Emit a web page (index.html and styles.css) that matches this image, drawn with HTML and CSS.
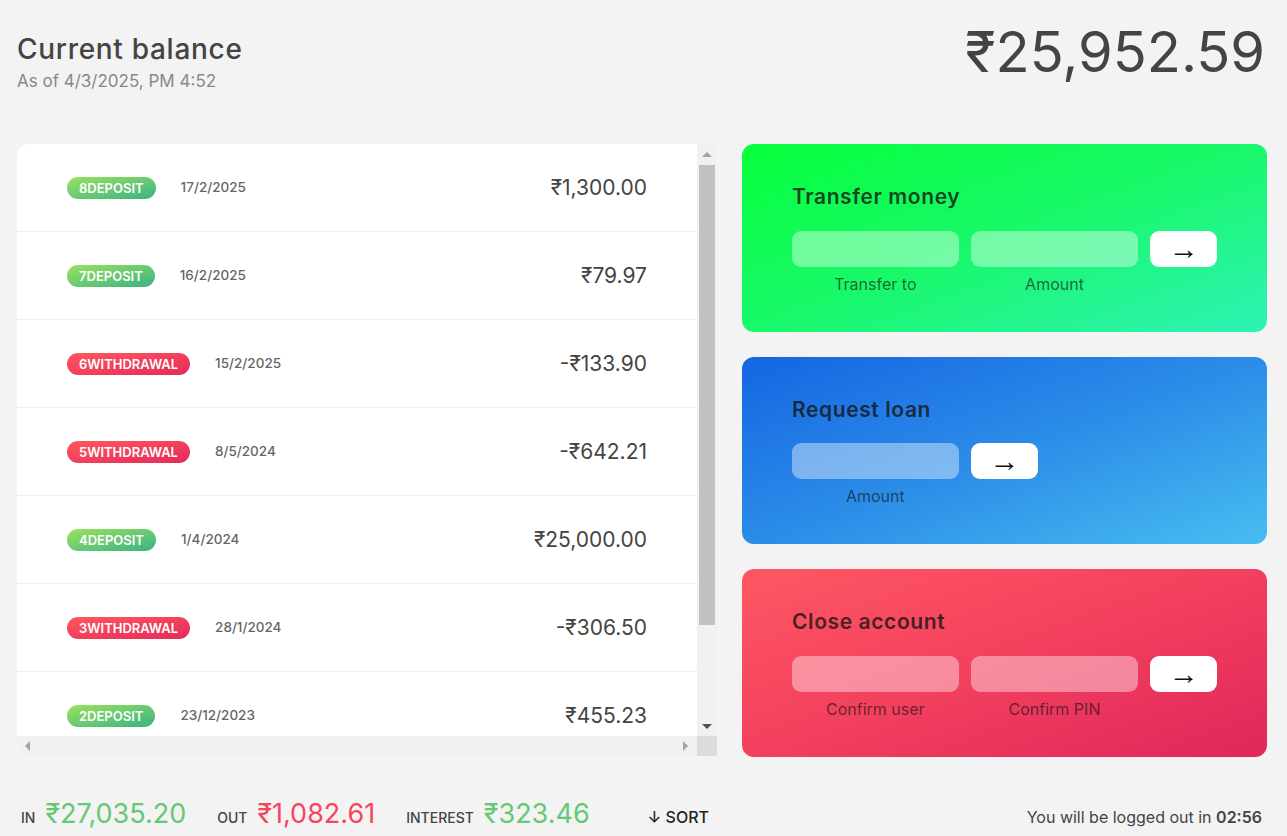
FILE: index.html
```html
<!DOCTYPE html>
<html lang="en">
<head>
<meta charset="utf-8">
<title>Bankist</title>
<link rel="stylesheet" href="styles.css">
</head>
<body>
<main class="app">
  <div class="balance">
    <div>
      <p class="balance__label">Current balance</p>
      <p class="balance__date">As of <span class="date">4/3/2025, PM 4:52</span></p>
    </div>
    <p class="balance__value">₹25,952.59</p>
  </div>

  <div class="movements">
    <div class="movements__list">
      <div class="movements__row">
        <div class="movements__type movements__type--deposit">8deposit</div>
        <div class="movements__date">17/2/2025</div>
        <div class="movements__value">₹1,300.00</div>
      </div>
      <div class="movements__row">
        <div class="movements__type movements__type--deposit">7deposit</div>
        <div class="movements__date">16/2/2025</div>
        <div class="movements__value">₹79.97</div>
      </div>
      <div class="movements__row">
        <div class="movements__type movements__type--withdrawal">6withdrawal</div>
        <div class="movements__date">15/2/2025</div>
        <div class="movements__value">-₹133.90</div>
      </div>
      <div class="movements__row">
        <div class="movements__type movements__type--withdrawal">5withdrawal</div>
        <div class="movements__date">8/5/2024</div>
        <div class="movements__value">-₹642.21</div>
      </div>
      <div class="movements__row">
        <div class="movements__type movements__type--deposit">4deposit</div>
        <div class="movements__date">1/4/2024</div>
        <div class="movements__value">₹25,000.00</div>
      </div>
      <div class="movements__row">
        <div class="movements__type movements__type--withdrawal">3withdrawal</div>
        <div class="movements__date">28/1/2024</div>
        <div class="movements__value">-₹306.50</div>
      </div>
      <div class="movements__row">
        <div class="movements__type movements__type--deposit">2deposit</div>
        <div class="movements__date">23/12/2023</div>
        <div class="movements__value">₹455.23</div>
      </div>
      <div class="movements__row">
        <div class="movements__type movements__type--deposit">1deposit</div>
        <div class="movements__date">18/11/2023</div>
        <div class="movements__value">₹200.00</div>
      </div>
    </div>

    <div class="scrollbar scrollbar--v">
      <div class="scrollbar__btn">
        <svg width="20" height="20" viewBox="0 0 20 20"><polygon points="5,13 15,13 10,8" fill="#a3a3a3"/></svg>
      </div>
      <div class="scrollbar__track scrollbar__track--v"><div class="scrollbar__thumb--v"></div></div>
      <div class="scrollbar__btn">
        <svg width="20" height="20" viewBox="0 0 20 20"><polygon points="5,8 15,8 10,13" fill="#505050"/></svg>
      </div>
    </div>

    <div class="scrollbar scrollbar--h">
      <div class="scrollbar__btn">
        <svg width="20" height="20" viewBox="0 0 20 20"><polygon points="13,5 13,15 8,10" fill="#a3a3a3"/></svg>
      </div>
      <div class="scrollbar__track"></div>
      <div class="scrollbar__btn">
        <svg width="20" height="20" viewBox="0 0 20 20"><polygon points="6,5 6,15 11,10" fill="#a3a3a3"/></svg>
      </div>
    </div>

    <div class="scrollbar__corner"></div>
  </div>

  <div class="operations">
    <section class="operation operation--transfer">
      <h2>Transfer money</h2>
      <form class="form form--transfer">
        <input type="text" class="form__input">
        <input type="number" class="form__input">
        <button type="button" class="form__btn">→</button>
        <label class="form__label">Transfer to</label>
        <label class="form__label">Amount</label>
      </form>
    </section>
    <section class="operation operation--loan">
      <h2>Request loan</h2>
      <form class="form form--loan">
        <input type="number" class="form__input">
        <button type="button" class="form__btn">→</button>
        <label class="form__label form__label--loan">Amount</label>
      </form>
    </section>
    <section class="operation operation--close">
      <h2>Close account</h2>
      <form class="form form--close">
        <input type="text" class="form__input">
        <input type="password" class="form__input">
        <button type="button" class="form__btn">→</button>
        <label class="form__label">Confirm user</label>
        <label class="form__label">Confirm PIN</label>
      </form>
    </section>
  </div>

  <div class="summary">
    <span class="summary__label">In</span>
    <span class="summary__value summary__value--in">₹27,035.20</span>
    <span class="summary__label">Out</span>
    <span class="summary__value summary__value--out">₹1,082.61</span>
    <span class="summary__label">Interest</span>
    <span class="summary__value summary__value--interest">₹323.46</span>
    <button type="button" class="btn--sort">↓ SORT</button>
  </div>

  <p class="logout-timer">You will be logged out in <span class="timer">02:56</span></p>
</main>
</body>
</html>
```
FILE: styles.css
```css
* {
  margin: 0;
  padding: 0;
  box-sizing: border-box;
}

body {
  font-family: Inter, "Noto Sans", sans-serif;
  color: #444;
  background-color: #f3f3f3;
  line-height: 1.5;
}

.app {
  width: 1250px;
  margin-left: 17px;
  display: grid;
  grid-template-columns: 700px 525px;
  grid-template-rows: auto 612px auto;
  column-gap: 25px;
}

/* BALANCE */
.balance {
  grid-column: 1 / span 2;
  display: flex;
  align-items: flex-start;
  justify-content: space-between;
  padding-top: 31px;
  height: 144px;
}

.balance__label {
  font-size: 28px;
  font-weight: 500;
  letter-spacing: 0.7px;
  line-height: 1.3;
  color: #444;
}

.balance__date {
  margin-top: 3px;
  font-size: 17px;
  color: #888;
  line-height: 1.3;
}

.balance__value {
  font-size: 56px;
  font-weight: 400;
  line-height: 1.2;
  color: #444;
  margin-top: -12px;
  margin-right: 2px;
}

/* MOVEMENTS */
.movements {
  grid-row: 2;
  display: grid;
  grid-template-columns: 1fr 20px;
  grid-template-rows: 1fr 20px;
  background-color: #fff;
  border-radius: 12px 0 0 12px;
  overflow: hidden;
}

.movements__list {
  overflow: hidden;
}

.scrollbar {
  display: flex;
  background-color: #f1f1f1;
}

.scrollbar--v {
  flex-direction: column;
}

.scrollbar__btn {
  flex: 0 0 20px;
  width: 20px;
  height: 20px;
}

.scrollbar__btn svg {
  display: block;
}

.scrollbar__track {
  flex: 1;
}

.scrollbar__track--v {
  padding: 1px 2px;
}

.scrollbar__thumb--v {
  height: 460px;
  background-color: #c1c1c1;
}

.scrollbar__corner {
  background-color: #dcdcdc;
}

.movements__row {
  padding: 27px 50px;
  display: flex;
  align-items: center;
  border-bottom: 1px solid #eee;
  height: 88px;
}

.movements__type {
  font-size: 13px;
  text-transform: uppercase;
  font-weight: 600;
  color: #fff;
  padding: 1px 12px;
  border-radius: 100px;
  margin-right: 25px;
  line-height: 20px;
}

.movements__type--deposit {
  background-image: linear-gradient(to top left, #39b385, #9be15d);
}

.movements__type--withdrawal {
  background-image: linear-gradient(to top left, #e52a5a, #ff585f);
}

.movements__date {
  font-size: 13.5px;
  font-weight: 500;
  color: #666;
}

.movements__value {
  font-size: 21px;
  margin-left: auto;
  color: #444;
}

/* OPERATIONS */
.operations {
  grid-row: 2;
  grid-column: 2;
  display: flex;
  flex-direction: column;
  gap: 25px;
}

.operation {
  height: 187.5px;
  border-radius: 12px;
  padding: 37px 50px;
  color: #333;
}

.operation h2 {
  font-size: 21px;
  font-weight: 600;
  letter-spacing: 0.6px;
  line-height: 1.5;
  margin-bottom: 18px;
  color: rgba(20, 20, 20, 0.8);
}

.operation--transfer {
  background-image: linear-gradient(160deg, #06ff3b 0%, #19f86a 50%, #2ef2b6 100%);
}

.operation--loan {
  background-image: linear-gradient(160deg, #1565e2 0%, #2b8ce8 50%, #47bdf0 100%);
}

.operation--close {
  background-image: linear-gradient(160deg, #ff5763 0%, #f2405e 50%, #e0265a 100%);
}

.form {
  display: grid;
  grid-template-columns: 2.5fr 2.5fr 1fr;
  grid-template-rows: auto auto;
  gap: 5px 12.5px;
}

.form--loan {
  grid-template-columns: 2.5fr 1fr 2.5fr;
}

.form__label--loan {
  grid-row: 2;
}

.form__input {
  width: 100%;
  height: 36px;
  border: none;
  background-color: rgba(255, 255, 255, 0.4);
  font-family: inherit;
  font-size: 18px;
  text-align: center;
  color: #333;
  padding: 4px 12px;
  border-radius: 9px;
  outline: none;
}

.form__btn {
  height: 36px;
  border: none;
  border-radius: 9px;
  font-size: 30px;
  background-color: #fff;
  color: #111;
  font-family: "Liberation Serif", serif;
  line-height: 1;
}

.form__label {
  font-size: 16px;
  text-align: center;
  line-height: 1.5;
  color: rgba(20, 20, 20, 0.65);
}

/* SUMMARY */
.summary {
  grid-row: 3;
  grid-column: 1;
  display: flex;
  align-items: baseline;
  white-space: nowrap;
  padding: 0 4px;
  margin-top: 39px;
}

.summary__label {
  flex: none;
  font-size: 14px;
  font-weight: 500;
  text-transform: uppercase;
  margin-right: 10px;
  color: #444;
}

.summary__value {
  flex: none;
  font-size: 27px;
  margin-right: 31px;
  line-height: 1.4;
}

.summary__value--in,
.summary__value--interest {
  color: #66c873;
}

.summary__value--out {
  color: #f5465d;
}

.btn--sort {
  flex: none;
  margin-left: auto;
  margin-right: 4px;
  border: none;
  background: none;
  font-family: inherit;
  font-size: 16px;
  font-weight: 500;
  color: #222;
}

.logout-timer {
  grid-row: 3;
  grid-column: 2;
  align-self: end;
  padding-right: 5px;
  padding-bottom: 4px;
  text-align: right;
  font-size: 16px;
  color: #444;
}

.timer {
  font-weight: 600;
}
```
